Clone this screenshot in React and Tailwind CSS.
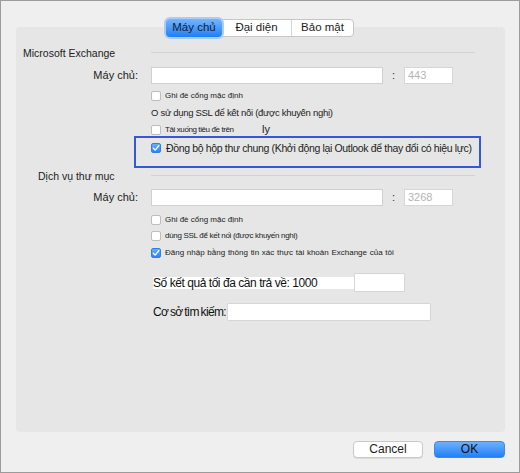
import React from 'react'

const font = { fontFamily: '"Liberation Sans", Arial, sans-serif' }

function Checkbox({ checked }) {
  if (checked) {
    return (
      <span className="flex-none w-[10px] h-[10px] rounded-[2px] bg-gradient-to-b from-[#69aefb] to-[#2a84f6] border border-[#2f7fe6] flex items-center justify-center">
        <svg width="8" height="8" viewBox="0 0 8 8" fill="none">
          <path d="M1.3 4.2 L3.2 6.1 L6.8 1.6" stroke="white" strokeWidth="1.3" strokeLinecap="round" strokeLinejoin="round" />
        </svg>
      </span>
    )
  }
  return <span className="flex-none w-[10px] h-[10px] rounded-[2px] bg-white border border-[#bdbdbd]" />
}

function CheckRow({ checked, children, className = '', textClass = 'text-[8px]' }) {
  return (
    <div className={`flex items-center pl-[135px] ${className}`}>
      <Checkbox checked={checked} />
      <span className={`ml-[4px] text-[#222] whitespace-nowrap ${textClass}`}>{children}</span>
    </div>
  )
}

function Section({ title, indent, className = '' }) {
  return (
    <div className={`flex items-center h-[16px] ${className}`}>
      <div className="w-[135px] flex-none text-[10.5px] text-[#222] whitespace-nowrap" style={{ paddingLeft: indent }}>
        {title}
      </div>
      <div className="w-[324px] h-px bg-[#d2d2d2] mb-[4px]" />
    </div>
  )
}

function ServerRow({ port, className = '' }) {
  return (
    <div className={`flex items-center h-[17px] ${className}`}>
      <div className="w-[122px] flex-none text-right text-[11px] text-[#222]">Máy chủ:</div>
      <div className="ml-[13px] w-[232px] h-[17px] bg-white border border-[#d0d0d0]" />
      <div className="w-[21px] text-center text-[11px] text-[#333]">:</div>
      <div className="w-[49px] h-[17px] bg-white border border-[#d6d6d6] flex items-center pl-[3px] text-[11px] text-[#b5b5b5]">
        {port}
      </div>
    </div>
  )
}

export default function App() {
  return (
    <div className="w-[520px] h-[473px] bg-[#efefef] border border-[#9b9b9b] flex flex-col" style={font}>
      {/* tabs */}
      <div className="mt-[18px] flex justify-center relative z-10">
        <div className="flex h-[18px] bg-white border border-[#c6c6c6] rounded-[4px] text-[11.5px] text-[#1d1d1d]">
          <div className="w-[56px] -my-px -ml-px rounded-[4px] bg-gradient-to-b from-[#73b6fb] to-[#1b7ef7] ring-2 ring-[#a9cdf7] flex items-center justify-center text-[#142036]">
            Máy chủ
          </div>
          <div className="w-[69px] flex items-center justify-center">Đại diện</div>
          <div className="w-px bg-[#d4d4d4]" />
          <div className="w-[61px] flex items-center justify-center">Bảo mật</div>
        </div>
      </div>

      {/* panel */}
      <div className="-mt-[10px] ml-[15px] w-[489px] h-[405px] bg-[#e6e6e6] rounded-[4px] flex flex-col">
        <Section title="Microsoft Exchange" indent={7} className="mt-[19px]" />
        <ServerRow port="443" className="mt-[5px]" />
        <CheckRow className="mt-[5px] h-[14px]">Ghi đè cổng mặc định</CheckRow>
        <div className="mt-[3px] h-[14px] pl-[135px] flex items-center text-[9.5px] tracking-[-0.3px] text-[#222] whitespace-nowrap">
          O sử dụng SSL để kết nối (được khuyến nghị)
        </div>
        <div className="mt-[3px] h-[13px] flex items-center">
          <div className="w-[246px] flex-none">
            <CheckRow textClass="text-[8px] tracking-[-0.4px]">Tải xuống tiêu đề trên</CheckRow>
          </div>
          <span className="text-[11px] text-[#222]">ly</span>
        </div>
        <div className="ml-[118px] w-[347px] h-[32px] border-2 border-[#3657d8] pt-[5px] pl-[15px] flex items-start">
          <Checkbox checked />
          <span className="ml-[5px] -mt-[2px] text-[10.5px] leading-[14px] text-[#1d1d1d] whitespace-nowrap tracking-[-0.35px]">
            Đồng bộ hộp thư chung (Khởi động lại Outlook để thay đổi có hiệu lực)
          </span>
        </div>

        <Section title="Dịch vụ thư mục" indent={22} className="mt-[1px]" />
        <ServerRow port="3268" className="mt-[4px]" />
        <CheckRow className="mt-[7px] h-[14px]">Ghi đè cổng mặc định</CheckRow>
        <CheckRow className="mt-[2px] h-[14px]" textClass="text-[8px] tracking-[-0.3px]">dùng SSL để kết nối (được khuyến nghị)</CheckRow>
        <CheckRow checked className="mt-[3px] h-[14px]">
          <span style={{ wordSpacing: '0.5px' }}>Đăng nhập bằng thông tin xác thực tài khoản Exchange của tôi</span>
        </CheckRow>

        <div className="mt-[13px] h-[19px] pl-[137px] flex items-center">
          <span className="w-[201px] h-[12px] bg-white text-[12px] leading-[12px] text-[#111] whitespace-nowrap tracking-[-0.45px]">
            Số kết quả tối đa cần trả về: 1000
          </span>
          <div className="w-[51px] h-[19px] bg-white border border-[#d6d6d6] rounded-[1px]" />
        </div>
        <div className="mt-[11px] h-[18px] pl-[137px] flex items-center">
          <span className="w-[73px] text-[12px] text-[#111] whitespace-nowrap tracking-[-0.65px]" style={{ wordSpacing: '-1px' }}>
            Cơ sở tìm kiếm:
          </span>
          <div className="ml-px w-[204px] h-[18px] bg-white border border-[#d6d6d6] rounded-[1px]" />
        </div>
      </div>

      {/* buttons */}
      <div className="mt-[9px] mr-[14px] flex justify-end gap-[11px]">
        <button className="w-[70px] h-[17px] bg-white border border-[#c8c8c8] rounded-[4px] shadow-[0_1px_0_rgba(0,0,0,0.08)] text-[12px] leading-[15px] text-[#1d1d1d]">
          Cancel
        </button>
        <button className="w-[71px] h-[17px] bg-gradient-to-b from-[#6cb0fb] to-[#1e7ff6] border border-[#3c88ec] rounded-[4px] text-[12px] leading-[15px] text-[#101010]">
          OK
        </button>
      </div>
    </div>
  )
}
